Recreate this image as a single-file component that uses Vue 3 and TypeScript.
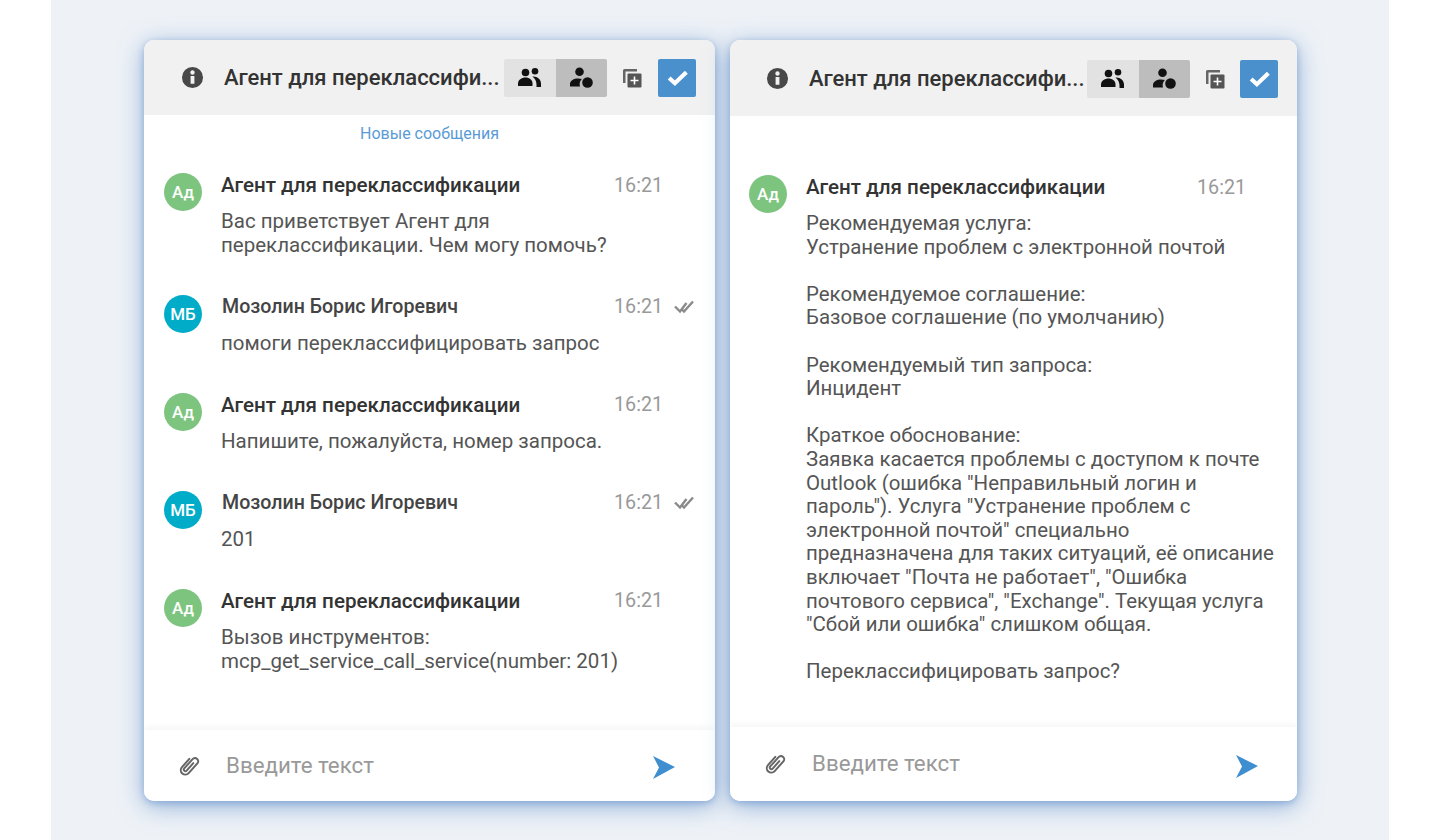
<script setup lang="ts">
interface Msg { name: string; initials: string; kind: 'agent' | 'user'; time: string; text: string[] }
const left: Msg[] = [
  { name: 'Агент для переклассификации', initials: 'Ад', kind: 'agent', time: '16:21', text: ['Вас приветствует Агент для', 'переклассификации. Чем могу помочь?'] },
  { name: 'Мозолин Борис Игоревич', initials: 'МБ', kind: 'user', time: '16:21', text: ['помоги переклассифицировать запрос'] },
  { name: 'Агент для переклассификации', initials: 'Ад', kind: 'agent', time: '16:21', text: ['Напишите, пожалуйста, номер запроса.'] },
  { name: 'Мозолин Борис Игоревич', initials: 'МБ', kind: 'user', time: '16:21', text: ['201'] },
  { name: 'Агент для переклассификации', initials: 'Ад', kind: 'agent', time: '16:21', text: ['Вызов инструментов:', 'mcp_get_service_call_service(number: 201)'] },
]
const right: Msg[] = [
  { name: 'Агент для переклассификации', initials: 'Ад', kind: 'agent', time: '16:21', text: [
    'Рекомендуемая услуга:', 'Устранение проблем с электронной почтой', '',
    'Рекомендуемое соглашение:', 'Базовое соглашение (по умолчанию)', '',
    'Рекомендуемый тип запроса:', 'Инцидент', '',
    'Краткое обоснование:', 'Заявка касается проблемы с доступом к почте', 'Outlook (ошибка "Неправильный логин и', 'пароль"). Услуга "Устранение проблем с', 'электронной почтой" специально', 'предназначена для таких ситуаций, её описание', 'включает "Почта не работает", "Ошибка', 'почтового сервиса", "Exchange". Текущая услуга', '"Сбой или ошибка" слишком общая.', '',
    'Переклассифицировать запрос?'] },
]
const panes = [
  { id: 'a', msgs: left, isNew: true },
  { id: 'b', msgs: right, isNew: false },
]
</script>

<template>
  <div class="page">
    <section v-for="p in panes" :key="p.id" class="card" :class="'card-' + p.id">
      <header class="head">
        <svg class="info" viewBox="0 0 24 24"><path d="M12 1a11 11 0 1 0 0 22 11 11 0 0 0 0-22zm2 17.500h-4V10.500h4v8zM12 9a2.300 2.300 0 1 1 0-4.600A2.300 2.300 0 0 1 12 9z" fill="#484848" fill-rule="evenodd"/></svg>
        <div class="title">Агент для переклассифи...</div>
        <div class="seg">
          <button class="seg-btn">
            <svg viewBox="0 0 23 20"><circle cx="7.500" cy="5" r="3.800"/><circle cx="17" cy="3.800" r="3.300"/><path d="M0 18.500v-2.500c0-3.500 3.500-6 7.500-6s7 2.500 7 6v2.500H0z"/><path d="M14.500 9c4.500-.5 8.500 2.500 8.500 7v3.500h-4.500V17c0-3.200-1.500-6-4-8z"/></svg>
          </button>
          <button class="seg-btn on">
            <svg viewBox="0 0 23 21"><circle cx="9.500" cy="4.800" r="4.300"/><path d="M0 19.500v-2.500c0-3.500 4-5.500 8-5.500 1.500 0 2.700.200 3.800.600a7.500 7.500 0 0 0-1.800 7.400H0z"/><circle cx="17.500" cy="15.500" r="5.300"/></svg>
          </button>
        </div>
        <svg class="copy" viewBox="0 0 20 20"><path d="M1 2.500a1.500 1.500 0 0 1 1.500-1.500H15v2.500H3.500V15H1z" fill="#666"/><rect x="5.500" y="5.500" width="14" height="14" rx="1" fill="#555"/><path d="M11.700 8.500h1.600v3.200h3.200v1.600h-3.200v3.200h-1.600v-3.200H8.500v-1.600h3.200z" fill="#fff"/></svg>
        <button class="check">
          <svg viewBox="0 0 24 24"><path d="M4 12.500l5.500 5L20.500 7" fill="none" stroke="#fff" stroke-width="4"/></svg>
        </button>
      </header>

      <div class="body">
        <div class="new-line" :class="{ hidden: !p.isNew }">Новые сообщения</div>
        <article v-for="(m, i) in p.msgs" :key="i" class="msg">
          <div class="ava" :class="m.kind">{{ m.initials }}</div>
          <div class="main">
            <div class="meta">
              <span class="name" :class="m.kind">{{ m.name }}</span>
              <span class="time">{{ m.time }}</span>
              <svg v-if="m.kind === 'user'" class="ticks" viewBox="0 0 20 15"><path d="M1 7.500l5 5 6.500-8.500M8.500 11l1.500 1.500L19 2.500" fill="none" stroke="#8a8a8a" stroke-width="2.400"/></svg>
            </div>
            <div class="text">
              <div v-for="(l, j) in m.text" :key="j" class="line">{{ l || '\u00a0' }}</div>
            </div>
          </div>
        </article>
      </div>

      <footer class="foot">
        <svg class="clip" viewBox="0 0 24 24"><path transform="rotate(42 12 12)" d="M7.500 6.500v11a4.500 4.500 0 0 0 9 0V4.500a3.200 3.200 0 0 0-6.400 0v12.500a1.600 1.600 0 0 0 3.200 0V7" fill="none" stroke="#666" stroke-width="2" stroke-linecap="round"/></svg>
        <div class="ph">Введите текст</div>
        <svg class="send" viewBox="0 0 22 23"><path d="M0 0l22 11L0 23l6-11.500z" fill="#3f8fd0"/></svg>
      </footer>
    </section>
  </div>
</template>

<style>
html, body { margin: 0; background: #fff; }
</style>

<style scoped>
.page {
  box-sizing: border-box;
  width: 1338px;
  height: 840px;
  margin-left: 51px;
  padding: 40px 0 39px 93px;
  background: #eef2f7;
  display: flex;
  gap: 15px;
  font-family: Roboto, sans-serif;
  color: #555;
  overflow: hidden;
}
.card {
  width: 571px;
  height: 761px;
  display: flex;
  flex-direction: column;
  background: #fff;
  border-radius: 10px;
  box-shadow: 0 5px 24px rgba(80, 130, 195, 0.6), 0 2px 6px rgba(80, 130, 195, 0.4);
  overflow: hidden;
}
.card-b { width: 567px; }
.head {
  height: 75px;
  flex: none;
  background: #f1f1f1;
  display: flex;
  align-items: center;
  padding: 0 19px 0 37px;
}
.card-b .head { padding-left: 36px; padding-top: 1px; height: 76px; box-sizing: border-box; }
.info { width: 23px; height: 23px; flex: none; }
.title {
  margin-left: 20px;
  flex: 1;
  font-size: 22px;
  font-weight: 500;
  color: #333;
  white-space: nowrap;
}
.seg { display: flex; flex: none; border-radius: 2px; overflow: hidden; }
.seg-btn {
  width: 51.5px;
  height: 38px;
  border: 0;
  padding: 0;
  background: #e2e2e2;
  display: flex;
  align-items: center;
  justify-content: center;
}
.seg-btn.on { background: #bdbdbd; }
.seg-btn svg { width: 23px; height: 21px; fill: #111; }
.copy { width: 20px; height: 20px; margin: 0 16px 0 15px; flex: none; }
.card-b .copy { margin-right: 15px; }
.check {
  width: 38px;
  height: 38px;
  padding: 0;
  border: 0;
  border-radius: 2px;
  background: #4a90cc;
  display: flex;
  align-items: center;
  justify-content: center;
  flex: none;
}
.check svg { width: 25px; height: 25px; }
.body { flex: 1; padding: 0 20px; min-height: 0; }
.card-b .body { padding: 0 19px; }
.new-line {
  height: 37px;
  line-height: 37px;
  text-align: center;
  font-size: 16px;
  color: #5b9bd5;
  margin-bottom: 19px;
}
.card-b .new-line { margin-bottom: 20px; }
.hidden { visibility: hidden; }
.msg { display: flex; margin-bottom: 35.200px; }
.ava {
  width: 38px;
  height: 38px;
  border-radius: 50%;
  flex: none;
  color: #fff;
  font-size: 17px;
  font-weight: 500;
  text-align: center;
  line-height: 38px;
  margin-top: 2px;
}
.ava.agent { background: #7dc47f; }
.ava.user { background: #00acc8; }
.main { margin-left: 19px; flex: 1; }
.meta { display: flex; align-items: center; height: 28px; }
.name { font-size: 20.600px; font-weight: 500; color: #333; width: 393px; white-space: nowrap; flex: none; }
.name.user { font-size: 19.600px; font-weight: 500; color: #444; padding-left: 1px; box-sizing: border-box; }
.card-b .name { width: 391px; }
.time { font-size: 19.700px; color: #999; }
.ticks { width: 20px; height: 15px; margin-left: 11px; }
.text { margin-top: 11.200px; font-size: 20.500px; line-height: 23.650px; color: #555; white-space: nowrap; }
.card-b .text { margin-top: 11px; font-size: 20.450px; line-height: 23.600px; }
.foot {
  height: 71px;
  flex: none;
  display: flex;
  align-items: center;
  padding: 0 40px 0 33px;
  background: #fff;
  box-shadow: 0 -3px 6px rgba(0, 0, 0, 0.04);
}
.card-b .foot { height: 74px; padding-right: 39px; }
.clip { width: 24px; height: 24px; flex: none; }
.ph { margin-left: 25px; flex: 1; font-size: 22.300px; line-height: 26px; margin-bottom: 2px; color: #999; }
.send { width: 22px; height: 23px; flex: none; margin-top: 4px; }
</style>
